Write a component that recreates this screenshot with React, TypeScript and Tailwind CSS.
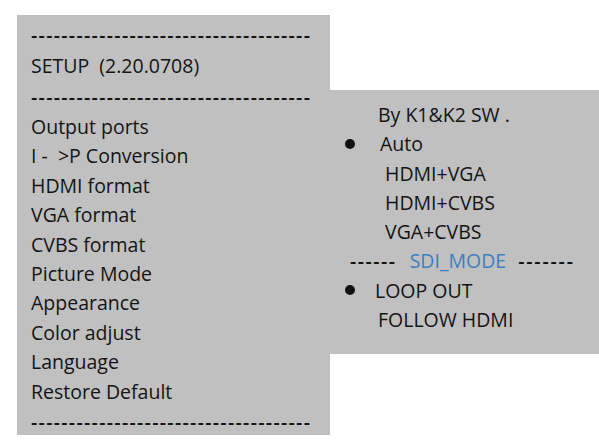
const menu = [
  "Output ports",
  "I -\u00a0 >P Conversion",
  "HDMI format",
  "VGA format",
  "CVBS format",
  "Picture Mode",
  "Appearance",
  "Color adjust",
  "Language",
  "Restore Default",
];

const dashes = "-".repeat(37);

function Bullet() {
  return <span className="inline-block w-[10px] h-[10px] rounded-full bg-[#111] shrink-0" />;
}

export default function App() {
  return (
    <div
      className="w-[599px] h-[445px] bg-white text-[#141414] text-[19.5px] overflow-hidden"
      style={{ fontFamily: '"Open Sans", "Noto Sans", sans-serif' }}
    >
      <div className="flex items-start pt-[15px] pl-[17px]">
        {/* main setup menu */}
        <div className="w-[313px] h-[420px] bg-[#c0c0c0] pt-[4px] pl-[14px] leading-[29.4px]">
          <div className="leading-[31px] tracking-[1.3px] font-semibold">{dashes}</div>
          <div className="leading-[31px]">SETUP&nbsp; (2.20.0708)</div>
          <div className="leading-[31px] tracking-[1.3px] font-semibold">{dashes}</div>
          {menu.map((m) => (
            <div key={m}>{m}</div>
          ))}
          <div className="leading-[31px] tracking-[1.3px] font-semibold">{dashes}</div>
        </div>

        {/* output ports submenu */}
        <div className="w-[269px] h-[264px] mt-[75px] bg-[#c0c0c0] pt-[10px] leading-[29.3px]">
          <div className="pl-[48px]">By K1&amp;K2 SW .</div>
          <div className="flex items-center pl-[15px]">
            <Bullet />
            <span className="ml-[25px]">Auto</span>
          </div>
          <div className="pl-[55px]">HDMI+VGA</div>
          <div className="pl-[55px]">HDMI+CVBS</div>
          <div className="pl-[55px]">VGA+CVBS</div>
          <div className="flex items-center pl-[20px]">
            <span className="tracking-[1.5px] font-semibold">------</span>
            <span className="ml-[13px] text-[#3d7fc0]">SDI_MODE</span>
            <span className="ml-[12px] tracking-[1.8px] font-semibold">-------</span>
          </div>
          <div className="flex items-center pl-[15px]">
            <Bullet />
            <span className="ml-[20px]">LOOP OUT</span>
          </div>
          <div className="pl-[48px]">FOLLOW HDMI</div>
        </div>
      </div>
    </div>
  );
}
